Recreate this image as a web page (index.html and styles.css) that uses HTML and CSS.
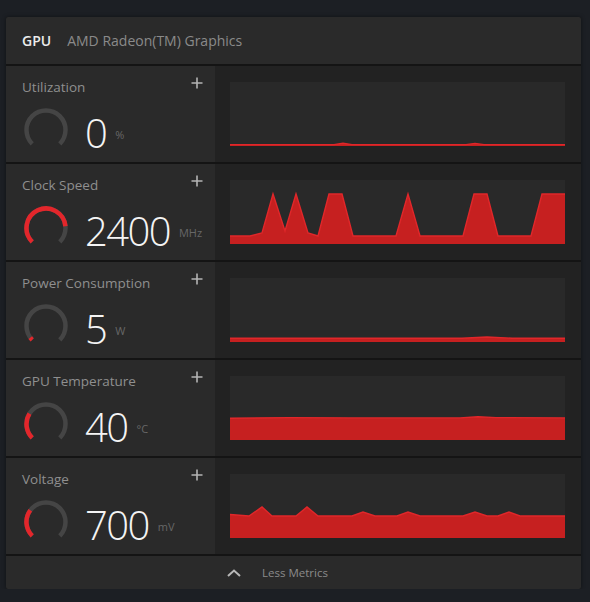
FILE: index.html
```html
<!DOCTYPE html>
<html lang="en">
<head>
<meta charset="utf-8">
<title>GPU Metrics</title>
<link rel="stylesheet" href="styles.css">
</head>
<body>
<div class="panel">
  <div class="header">
    <span class="hd-title">GPU</span>
    <span class="hd-sub">AMD Radeon(TM) Graphics</span>
  </div>

  <div class="row">
    <div class="left">
      <div class="label-row">
        <span class="label">Utilization</span>
        <svg class="plus" width="12" height="12" viewBox="0 0 12 12"><path d="M6 0.5V11.5M0.5 6H11.5"/></svg>
      </div>
      <div class="value-row">
        <svg class="gauge" width="44" height="44" viewBox="0 0 44 44">
          <path class="g-track" d="M8.21 35.79A19.5 19.5 0 1 1 35.79 35.79"/>
        </svg>
        <span class="num">0</span>
        <span class="unit">%</span>
      </div>
    </div>
    <div class="right">
      <svg class="chart" viewBox="0 0 335 64" preserveAspectRatio="none">
        <path class="c-fill" d="M0 62.6L104 62.6L113 61.2L122 62.6L236 62.6L245 61.4L254 62.6L335 62.6L335 64L0 64Z"/>
        <path class="c-line" d="M0 62.6L104 62.6L113 61.2L122 62.6L236 62.6L245 61.4L254 62.6L335 62.6"/>
      </svg>
    </div>
  </div>

  <div class="row">
    <div class="left">
      <div class="label-row">
        <span class="label">Clock Speed</span>
        <svg class="plus" width="12" height="12" viewBox="0 0 12 12"><path d="M6 0.5V11.5M0.5 6H11.5"/></svg>
      </div>
      <div class="value-row">
        <svg class="gauge" width="44" height="44" viewBox="0 0 44 44">
          <path class="g-track" d="M8.21 35.79A19.5 19.5 0 1 1 35.79 35.79"/>
          <path class="g-red" d="M8.21 35.79A19.5 19.5 0 1 1 41.43 20.30"/>
        </svg>
        <span class="num">2400</span>
        <span class="unit">MHz</span>
      </div>
    </div>
    <div class="right">
      <svg class="chart" viewBox="0 0 335 64" preserveAspectRatio="none">
        <path class="c-fill" d="M0 56L20 56L32 53L43 14L55 51L66 14L78 53L88 56L99 14L112 14L123 56L166 56L178 14L190 56L233 56L244 14L257 14L268 56L301 56L312 14L335 14L335 64L0 64Z"/>
        <path class="c-line" d="M0 56L20 56L32 53L43 14L55 51L66 14L78 53L88 56L99 14L112 14L123 56L166 56L178 14L190 56L233 56L244 14L257 14L268 56L301 56L312 14L335 14"/>
      </svg>
    </div>
  </div>

  <div class="row">
    <div class="left">
      <div class="label-row">
        <span class="label">Power Consumption</span>
        <svg class="plus" width="12" height="12" viewBox="0 0 12 12"><path d="M6 0.5V11.5M0.5 6H11.5"/></svg>
      </div>
      <div class="value-row">
        <svg class="gauge" width="44" height="44" viewBox="0 0 44 44">
          <path class="g-track" d="M8.21 35.79A19.5 19.5 0 1 1 35.79 35.79"/>
          <path class="g-red" d="M8.21 35.79A19.5 19.5 0 0 1 6.29 33.58"/>
        </svg>
        <span class="num">5</span>
        <span class="unit">W</span>
      </div>
    </div>
    <div class="right">
      <svg class="chart" viewBox="0 0 335 64" preserveAspectRatio="none">
        <path class="c-fill" d="M0 60.2L232 60.2L257 59L282 60.2L335 60.2L335 64L0 64Z"/>
        <path class="c-line" d="M0 60.2L232 60.2L257 59L282 60.2L335 60.2"/>
      </svg>
    </div>
  </div>

  <div class="row">
    <div class="left">
      <div class="label-row">
        <span class="label">GPU Temperature</span>
        <svg class="plus" width="12" height="12" viewBox="0 0 12 12"><path d="M6 0.5V11.5M0.5 6H11.5"/></svg>
      </div>
      <div class="value-row">
        <svg class="gauge" width="44" height="44" viewBox="0 0 44 44">
          <path class="g-track" d="M8.21 35.79A19.5 19.5 0 1 1 35.79 35.79"/>
          <path class="g-red" d="M8.21 35.79A19.5 19.5 0 0 1 5.46 11.67"/>
        </svg>
        <span class="num">40</span>
        <span class="unit">°C</span>
      </div>
    </div>
    <div class="right">
      <svg class="chart" viewBox="0 0 335 64" preserveAspectRatio="none">
        <path class="c-fill" d="M0 42.2L60 41.6L120 41.9L230 41.9L248 40.8L266 41.6L335 41.9L335 64L0 64Z"/>
        <path class="c-line" d="M0 42.2L60 41.6L120 41.9L230 41.9L248 40.8L266 41.6L335 41.9"/>
      </svg>
    </div>
  </div>

  <div class="row">
    <div class="left">
      <div class="label-row">
        <span class="label">Voltage</span>
        <svg class="plus" width="12" height="12" viewBox="0 0 12 12"><path d="M6 0.5V11.5M0.5 6H11.5"/></svg>
      </div>
      <div class="value-row">
        <svg class="gauge" width="44" height="44" viewBox="0 0 44 44">
          <path class="g-track" d="M8.21 35.79A19.5 19.5 0 1 1 35.79 35.79"/>
          <path class="g-red" d="M8.21 35.79A19.5 19.5 0 0 1 6.33 10.26"/>
        </svg>
        <span class="num">700</span>
        <span class="unit">mV</span>
      </div>
    </div>
    <div class="right">
      <svg class="chart" viewBox="0 0 335 64" preserveAspectRatio="none">
        <path class="c-fill" d="M0 40.5L19 42L32 33L42 42L66 42L77 33L88 42L122 42L133 38L145 42L167 42L178 38L190 42L233 42L245 38L257 42L268 42L279 38L290 42L335 42L335 64L0 64Z"/>
        <path class="c-line" d="M0 40.5L19 42L32 33L42 42L66 42L77 33L88 42L122 42L133 38L145 42L167 42L178 38L190 42L233 42L245 38L257 42L268 42L279 38L290 42L335 42"/>
      </svg>
    </div>
  </div>

  <div class="footer">
    <svg class="chev" width="14" height="8" viewBox="0 0 14 8"><path d="M1 7L7 1.5L13 7"/></svg>
    <span class="footer-text">Less Metrics</span>
  </div>
</div>
</body>
</html>
```

FILE: styles.css
```css
* { box-sizing: border-box; }

body {
  margin: 0;
  background: #1c1f24;
  font-family: "Open Sans", "Noto Sans", sans-serif;
}

.panel {
  width: 575px;
  margin: 17px 0 0 6px;
  background: #141414;
  display: flex;
  flex-direction: column;
  gap: 2px;
  border-radius: 2px;
  overflow: hidden;
  box-shadow: 0 0 4px rgba(0, 0, 0, 0.45);
}

.header {
  height: 47px;
  background: #2a2a2a;
  display: flex;
  align-items: center;
  padding-left: 16px;
  gap: 16px;
  font-size: 14px;
}

.hd-title {
  color: #ececec;
  font-weight: 600;
}

.hd-sub {
  color: #8a8a8a;
}

.row {
  height: 96px;
  display: grid;
  grid-template-columns: 209px 1fr;
}

.left {
  background: #2a2a2a;
  padding: 11px 12px 0 16px;
  display: flex;
  flex-direction: column;
}

.label-row {
  display: flex;
  justify-content: space-between;
  align-items: flex-start;
  height: 20px;
}

.label {
  color: #8f8f8f;
  font-size: 13.5px;
  line-height: 20px;
}

.plus path {
  stroke: #b4b4b4;
  stroke-width: 1.6;
  fill: none;
}

.value-row {
  display: flex;
  align-items: flex-start;
  margin-top: 11px;
  padding-left: 2px;
}

.gauge {
  flex: none;
}

.g-track, .g-red {
  fill: none;
  stroke-width: 4.5;
}

.g-track { stroke: #454545; }
.g-red { stroke: #e3262b; }

.num {
  color: #f4f4f4;
  font-size: 40px;
  font-weight: 300;
  line-height: 44px;
  letter-spacing: -1.6px;
  margin-left: 17px;
  margin-top: 3px;
}

.unit {
  color: #676767;
  font-size: 11px;
  line-height: 14px;
  margin-left: 9px;
  margin-top: 20px;
}

.right {
  background: #222222;
  padding: 16px 16px 16px 15px;
}

.chart {
  display: block;
  width: 100%;
  height: 64px;
  background: #292929;
}

.c-fill {
  fill: #c62020;
}

.c-line {
  fill: none;
  stroke: #e0272a;
  stroke-width: 1.4;
}

.footer {
  height: 33px;
  background: #2a2a2a;
  display: flex;
  align-items: center;
  padding-left: 221px;
  gap: 21px;
}

.chev path {
  fill: none;
  stroke: #b8b8b8;
  stroke-width: 2;
}

.footer-text {
  color: #8a8a8a;
  font-size: 11.5px;
}
```
